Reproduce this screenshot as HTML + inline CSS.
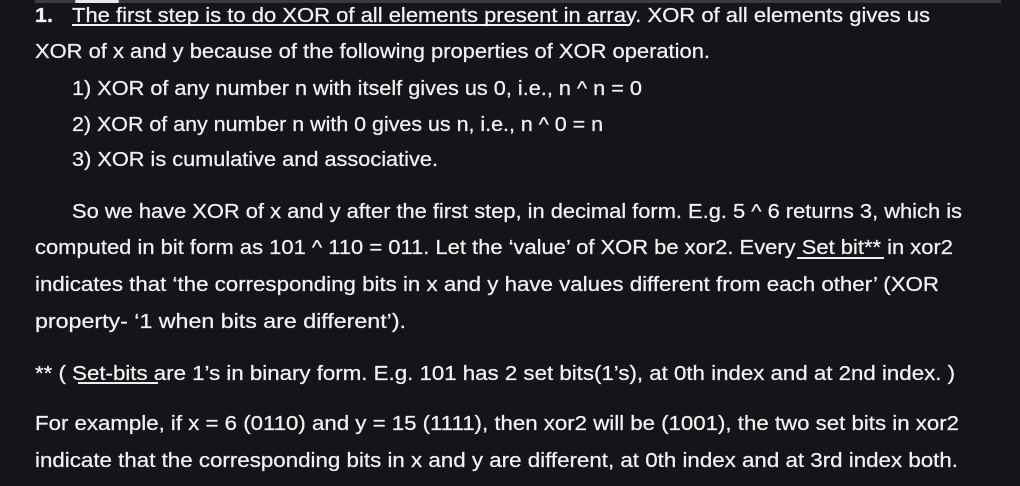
<!DOCTYPE html>
<html><head><meta charset="utf-8"><style>
html,body{margin:0;padding:0;background:#141519;width:1020px;height:486px;overflow:hidden}
svg{display:block}
text{font-family:"Liberation Sans",sans-serif;font-size:20px;fill:#f2f2f2;stroke:#f2f2f2;stroke-width:0.25px}
</style></head><body>
<svg width="1020" height="486" xmlns="http://www.w3.org/2000/svg">
<rect width="1020" height="486" fill="#141519"/>
<rect x="35" y="0" width="966" height="3" fill="#3a3b3f"/>
<rect x="75" y="0" width="44" height="3" rx="1.5" fill="#e8e8e8"/>
<text x="35" y="22" font-weight="bold" textLength="18" lengthAdjust="spacingAndGlyphs">1.</text>
<text x="72" y="22" textLength="858" lengthAdjust="spacingAndGlyphs">The first step is to do XOR of all elements present in array. XOR of all elements gives us</text>
<rect x="72" y="24" width="556" height="2" fill="#f0f0f0"/>
<text x="35" y="58" textLength="675" lengthAdjust="spacingAndGlyphs">XOR of x and y because of the following properties of XOR operation.</text>
<text x="72" y="95" textLength="570" lengthAdjust="spacingAndGlyphs">1) XOR of any number n with itself gives us 0, i.e., n ^ n = 0</text>
<text x="72" y="131" textLength="531" lengthAdjust="spacingAndGlyphs">2) XOR of any number n with 0 gives us n, i.e., n ^ 0 = n</text>
<text x="72" y="166" textLength="366" lengthAdjust="spacingAndGlyphs">3) XOR is cumulative and associative.</text>
<text x="72" y="218" textLength="890" lengthAdjust="spacingAndGlyphs">So we have XOR of x and y after the first step, in decimal form. E.g. 5 ^ 6 returns 3, which is</text>
<text x="35" y="254" textLength="918" lengthAdjust="spacingAndGlyphs">computed in bit form as 101 ^ 110 = 011. Let the ‘value’ of XOR be xor2. Every Set bit** in xor2</text>
<rect x="797" y="257" width="87" height="2" fill="#f0f0f0"/>
<text x="35" y="291" textLength="904" lengthAdjust="spacingAndGlyphs">indicates that ‘the corresponding bits in x and y have values different from each other’ (XOR</text>
<text x="35" y="328" textLength="371" lengthAdjust="spacingAndGlyphs">property- ‘1 when bits are different’).</text>
<text x="35" y="380" textLength="920" lengthAdjust="spacingAndGlyphs">** ( Set-bits are 1’s in binary form. E.g. 101 has 2 set bits(1’s), at 0th index and at 2nd index. )</text>
<rect x="78" y="382" width="80" height="2" fill="#f0f0f0"/>
<text x="35" y="430" textLength="924" lengthAdjust="spacingAndGlyphs">For example, if x = 6 (0110) and y = 15 (1111), then xor2 will be (1001), the two set bits in xor2</text>
<text x="35" y="467" textLength="923" lengthAdjust="spacingAndGlyphs">indicate that the corresponding bits in x and y are different, at 0th index and at 3rd index both.</text>
</svg>
</body></html>
